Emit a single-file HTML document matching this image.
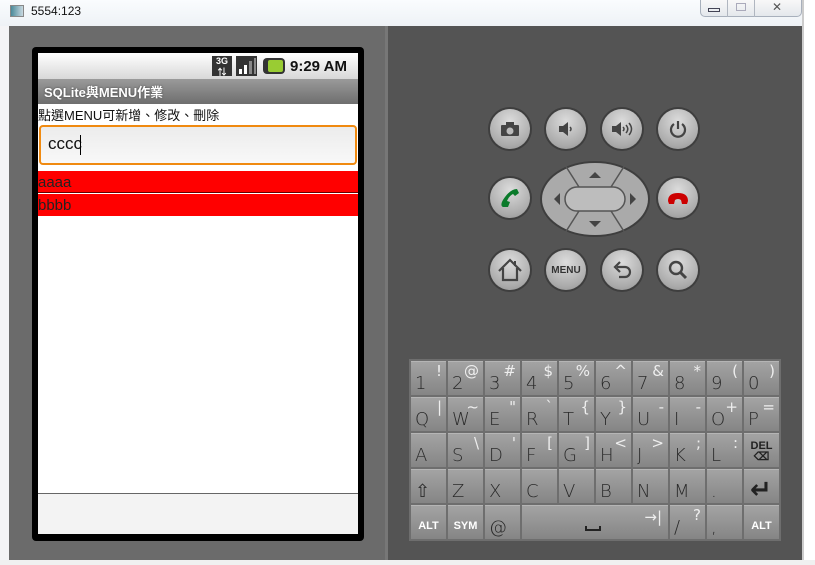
<!DOCTYPE html>
<html><head><meta charset="utf-8"><style>
*{margin:0;padding:0;box-sizing:border-box}
body{width:815px;height:565px;overflow:hidden;background:#fff;font-family:"Liberation Sans","Noto Sans CJK TC",sans-serif;position:relative}
.abs{position:absolute}
.title{left:0;top:0;width:815px;height:26px;background:linear-gradient(#fafcfe,#eef2f6)}
.left{left:9px;top:26px;width:376px;height:534px;background:#6b6b6b}
.div{left:385px;top:26px;width:3px;height:534px;background:#777}
.right{left:388px;top:26px;width:414px;height:534px;background:#545454}
.phone{left:32px;top:47px;width:332px;height:494px;background:#000;border-radius:4px}
.screen{left:38px;top:53px;width:320px;height:481px;background:#fff}
.key{position:absolute;width:35px;height:34px;background:linear-gradient(#a3a3a3,#858585);border-top:1px solid #b5b5b5;color:#222;font-family:"DejaVu Sans",sans-serif}
.key .m{position:absolute;left:4px;bottom:1px;font-size:18px;font-weight:300;color:#2a2a2a}
.key .s{position:absolute;right:4px;top:0;font-size:15px;color:#eee}
.key .b{position:absolute;left:0;right:0;bottom:7px;text-align:center;font-size:11px;font-weight:bold;color:#fff;font-family:"Liberation Sans",sans-serif}
.btn{position:absolute;width:40px;height:40px;border-radius:50%;background:radial-gradient(circle at 50% 30%,#dcdcdc,#ababab 70%,#8e8e8e);box-shadow:0 0 0 2px #3e3e3e;display:flex;align-items:center;justify-content:center}
</style></head><body>
<div class="abs title"></div>
<div class="abs" style="left:10px;top:5px;width:14px;height:12px;background:linear-gradient(90deg,#4a8a9a,#c8d8e0);border:1px solid #888"></div>
<div class="abs" style="left:31px;top:4px;font-size:12px;color:#111">5554:123</div>
<div class="abs" style="left:700px;top:0;width:102px;height:17px;border:1px solid #a8b0bc;border-top:none;border-radius:0 0 5px 5px;background:linear-gradient(#f8f8f8,#e4e8ec)"></div>
<div class="abs" style="left:727px;top:0;width:1px;height:17px;background:#b0b6c0"></div>
<div class="abs" style="left:754px;top:0;width:1px;height:17px;background:#b0b6c0"></div>
<div class="abs" style="left:708px;top:8px;width:12px;height:4px;border:1px solid #445"></div>
<div class="abs" style="left:736px;top:3px;width:10px;height:8px;border:1px solid #aab"></div>
<div class="abs" style="left:772px;top:0;font-size:12px;color:#555">✕</div>
<div class="abs" style="left:0;top:26px;width:9px;height:539px;background:#f4f4f6"></div>
<div class="abs" style="left:802px;top:0;width:13px;height:565px;background:#fff;border-left:2px solid #ccc"></div>
<div class="abs left"></div><div class="abs div"></div><div class="abs right"></div>
<div class="abs" style="left:0;top:560px;width:815px;height:5px;background:#f0f0f0"></div>
<div class="abs phone"></div>
<div class="abs screen"></div>
<div class="abs" style="left:38px;top:53px;width:320px;height:26px;background:linear-gradient(#fff,#d8d8d8)"></div>
<div class="abs" style="left:212px;top:56px;width:20px;height:20px;background:#333;color:#fff;font-size:9px;font-weight:bold;text-align:center;line-height:11px">3G<br>⇅</div>
<div class="abs" style="left:236px;top:56px;width:21px;height:20px;background:#333"></div>
<div class="abs" style="left:239px;top:69px;width:3px;height:5px;background:#fff"></div>
<div class="abs" style="left:244px;top:65px;width:3px;height:9px;background:#fff"></div>
<div class="abs" style="left:249px;top:61px;width:3px;height:13px;background:#888"></div>
<div class="abs" style="left:254px;top:58px;width:2px;height:16px;background:#888"></div>
<div class="abs" style="left:263px;top:58px;width:22px;height:16px;background:#333;border-radius:4px"></div>
<div class="abs" style="left:268px;top:60px;width:15px;height:12px;background:#9c3;border-radius:2px"></div>
<div class="abs" style="left:290px;top:58px;font-size:15px;font-weight:bold;color:#111">9:29 AM</div>
<div class="abs" style="left:38px;top:79px;width:320px;height:25px;background:linear-gradient(#9a9a9a,#6e6e6e)"></div>
<div class="abs" style="left:44px;top:82px;font-size:13px;font-weight:bold;color:#fff;text-shadow:0 0 2px #444">SQLite與MENU作業</div>
<div class="abs" style="left:38px;top:105px;font-size:13px;color:#111">點選MENU可新增、修改、刪除</div>
<div class="abs" style="left:39px;top:125px;width:318px;height:40px;border:2px solid #f08a10;border-radius:4px;background:linear-gradient(#ececec,#f8f8f8)"></div>
<div class="abs" style="left:48px;top:134px;font-size:17px;color:#111">cccc</div>
<div class="abs" style="left:80px;top:135px;width:1px;height:20px;background:#000"></div>
<div class="abs" style="left:38px;top:171px;width:320px;height:22px;background:#f00;border-bottom:1px solid #600"></div>
<div class="abs" style="left:38px;top:174px;font-size:15px;color:#222">aaaa</div>
<div class="abs" style="left:38px;top:194px;width:320px;height:22px;background:#f00"></div>
<div class="abs" style="left:38px;top:197px;font-size:15px;color:#222">bbbb</div>
<div class="abs" style="left:38px;top:493px;width:320px;height:1px;background:#666"></div>
<div class="abs" style="left:38px;top:494px;width:320px;height:40px;background:#f3f3f3"></div>

<!-- buttons -->
<div class="btn" style="left:490px;top:109px"><svg width="20" height="16"><rect x="1" y="4" width="18" height="11" rx="1" fill="#444"/><rect x="6" y="1" width="8" height="4" fill="#444"/><circle cx="10" cy="10" r="3.5" fill="#bbb"/></svg></div>
<div class="btn" style="left:546px;top:109px"><svg width="20" height="16"><path d="M3 5h4l5-4v14l-5-4H3z" fill="#444"/><path d="M14 6q2 2 0 4" stroke="#444" fill="none" stroke-width="1.5"/></svg></div>
<div class="btn" style="left:602px;top:109px"><svg width="24" height="16"><path d="M2 5h4l5-4v14l-5-4H2z" fill="#444"/><path d="M13 6q2 2 0 4M16 4q3.5 4 0 8M19 2q5 6 0 12" stroke="#444" fill="none" stroke-width="1.5"/></svg></div>
<div class="btn" style="left:658px;top:109px"><svg width="20" height="20"><path d="M6 5a7 7 0 1 0 8 0" stroke="#444" fill="none" stroke-width="2.2"/><path d="M10 2v8" stroke="#444" stroke-width="2.2"/></svg></div>
<div class="btn" style="left:490px;top:178px"><svg width="22" height="22"><path d="M4 20q-4-2 2-10t12-8l2 4-4 3-2-2q-4 2-6 7l3 1-2 5z" fill="#0a7a2a"/></svg></div>
<div class="btn" style="left:658px;top:178px"><svg width="24" height="14"><path d="M2 10q0-8 10-8t10 8l-1 3h-5l-1-4q-3-2-6 0l-1 4H3z" fill="#c00"/></svg></div>
<div class="btn" style="left:490px;top:250px"><svg width="26" height="24"><path d="M2 13L13 2l11 11M6 10v12h14V10" stroke="#444" fill="none" stroke-width="2.2"/><path d="M18 3v5" stroke="#444" stroke-width="2"/></svg></div>
<div class="btn" style="left:546px;top:250px"><span style="font-size:10px;font-weight:bold;color:#333">MENU</span></div>
<div class="btn" style="left:602px;top:250px"><svg width="22" height="22"><path d="M6 8h8a5 5 0 0 1 0 10H8" stroke="#444" fill="none" stroke-width="2.2"/><path d="M9 3L4 8l5 5" stroke="#444" fill="none" stroke-width="2.2"/></svg></div>
<div class="btn" style="left:658px;top:250px"><svg width="22" height="22"><circle cx="9" cy="9" r="6" stroke="#444" fill="none" stroke-width="2.4"/><path d="M13 13l6 6" stroke="#444" stroke-width="3"/></svg></div>
<!-- dpad -->
<svg class="abs" style="left:539px;top:160px" width="112" height="78">
<ellipse cx="56" cy="39" rx="54" ry="37" fill="#aaa" stroke="#3e3e3e" stroke-width="2"/>
<path d="M26 5L40 27M86 5L72 27M26 73L40 51M86 73L72 51" stroke="#555" stroke-width="1.5"/>
<rect x="26" y="27" width="60" height="24" rx="12" fill="#bdbdbd" stroke="#555" stroke-width="1.5"/>
<path d="M50 18h12l-6-6z M50 61h12l-6 6z M15 39l6-6v12z M97 39l-6-6v12z" fill="#444"/>
</svg>
<!-- keyboard -->
<div class="abs" style="left:409px;top:359px;width:372px;height:182px;background:#6e6e6e"></div>
<div id="kb"></div>
<script>
const rows=[
[["1","!"],["2","@"],["3","#"],["4","$"],["5","%"],["6","^"],["7","&"],["8","*"],["9","("],["0",")"]],
[["Q","|"],["W","~"],["E","\""],["R","`"],["T","{"],["Y","}"],["U","-"],["I","-"],["O","+"],["P","="]],
[["A",""],["S","\\"],["D","'"],["F","["],["G","]"],["H","<"],["J",">"],["K",";"],["L",":"],["DEL","",1]],
[["⇧",""],["Z",""],["X",""],["C",""],["V",""],["B",""],["N",""],["M",""],[".",""],["↵","",2]],
];
let h="";
rows.forEach((r,ri)=>r.forEach((k,ci)=>{
 const x=411+ci*37,y=361+ri*36;
 let inner;
 if(k[2]==1) inner='<div class="b" style="color:#222;bottom:4px;line-height:11px">DEL<br>⌫</div>';
 else if(k[2]==2) inner='<div class="m" style="font-size:26px;left:6px;bottom:-2px;font-weight:bold;color:#222">↵</div>';
 else inner=`<div class="m">${k[0]}</div><div class="s">${k[1]}</div>`;
 h+=`<div class="key" style="left:${x}px;top:${y}px">${inner}</div>`;
}));
const y5=361+4*36;
h+=`<div class="key" style="left:411px;top:${y5}px"><div class="b">ALT</div></div>`;
h+=`<div class="key" style="left:448px;top:${y5}px"><div class="b">SYM</div></div>`;
h+=`<div class="key" style="left:485px;top:${y5}px"><div class="m">@</div></div>`;
h+=`<div class="key" style="left:522px;top:${y5}px;width:146px"><div class="s" style="top:2px;right:6px">→|</div><div style="position:absolute;left:63px;bottom:8px;width:16px;height:5px;border:2px solid #222;border-top:none"></div></div>`;
h+=`<div class="key" style="left:670px;top:${y5}px"><div class="m">/</div><div class="s">?</div></div>`;
h+=`<div class="key" style="left:707px;top:${y5}px"><div class="m">,</div></div>`;
h+=`<div class="key" style="left:744px;top:${y5}px"><div class="b">ALT</div></div>`;
document.getElementById("kb").innerHTML=h;
</script>
</body></html>
